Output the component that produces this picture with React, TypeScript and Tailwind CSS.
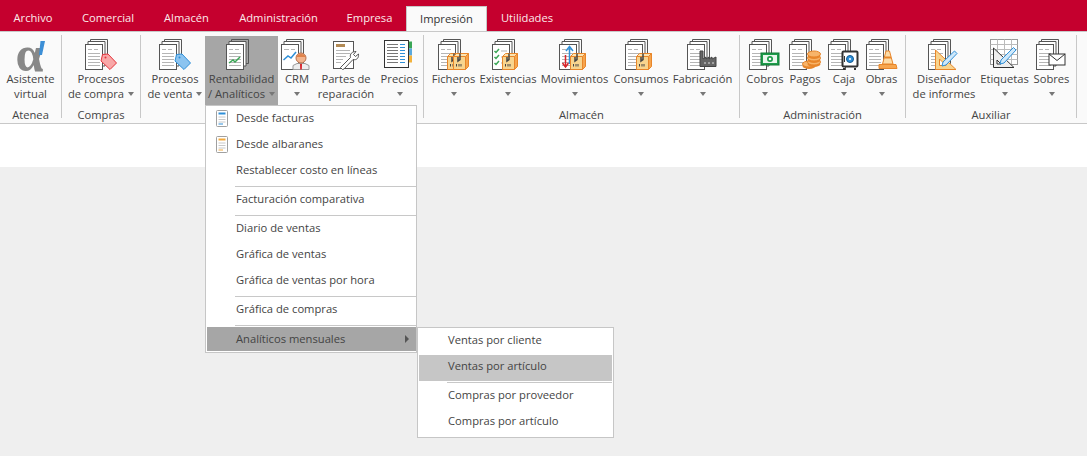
import React from "react";

const F = "[font-family:'Open_Sans','Noto_Sans',sans-serif]";

function Page({ children, lines = true }: { children?: React.ReactNode; lines?: boolean }) {
  return (
    <svg width="34" height="34" viewBox="0 0 34 34" className="block">
      <path d="M6.5 3.5V1.5H23.5V25.5H21" fill="none" stroke="#555" />
      <path d="M4 6V3.5H21V28H18.5" fill="#fff" stroke="#555" />
      <rect x="1.5" y="6.5" width="17" height="25" fill="#fff" stroke="#555" />
      {lines && (
        <g stroke="#b5b5b5">
          <path d="M4 11.5H8M10 11.5H14" />
          <path d="M4 15.5H16M4 18.5H16M4 21.5H16M4 24.5H16M4 27.5H16" />
        </g>
      )}
      {children}
    </svg>
  );
}

function Box({ x = 0 }: { x?: number }) {
  return (
    <g transform={`translate(${x} 0)`}>
      <path d="M11.5 18.5H23.5V31.5H11.5Z" fill="#f8d48e" stroke="#e8862a" />
      <path d="M23.5 18.5L26.5 15.5V28.5L23.5 31.5Z" fill="#f6a44c" stroke="#e8862a" />
      <path d="M11.5 18.5L14.5 15.5H26.5L23.5 18.5Z" fill="#fbe3b0" stroke="#e8862a" />
      <path d="M16 19V23L18 21.5V15.5" fill="none" stroke="#444" strokeWidth="1.5" />
      <path d="M14.5 28.5V26M17 28.5V26M19 28.5V26" stroke="#444" />
    </g>
  );
}

const Tag = ({ fill, line }: { fill: string; line: string }) => (
  <g>
    <path d="M18.5 16.5L24 16L32.5 25L26 31.5L17 23Z" fill={fill} stroke={line} />
    <circle cx="21.5" cy="19.5" r="1" fill={line} />
  </g>
);

function Alpha() {
  return (
    <div className="relative h-[34px] w-[34px]">
      <span className="absolute left-[2px] top-[-1px] text-[50px] font-bold leading-[34px] text-[#888] [font-family:'Liberation_Serif',serif]">α</span>
      <svg width="34" height="34" viewBox="0 0 34 34" className="absolute left-0 top-0 block">
        <path d="M26.5 3H31L28 17H25Z" fill="#3c8fd6" />
      </svg>
    </div>
  );
}

function CrmIcon() {
  return (
    <Page lines={false}>
      <path d="M4 11.5H9M11 11.5H15" stroke="#b5b5b5" />
      <path d="M3.5 22L8 18L11 20L16 14" fill="none" stroke="#2e8fd8" strokeWidth="1.5" />
      <path d="M13 31.5V27.5L17 25.5H25L29 27.5V31.5Z" fill="#eee" stroke="#999" />
      <path d="M20 26H22L21.8 31.5H20.2Z" fill="#d8232a" />
      <circle cx="21" cy="20" r="5" fill="#f3b48d" stroke="#b96f4a" />
      <path d="M16.5 19C17 15 25 15 25.5 19Z" fill="#e0824a" />
    </Page>
  );
}

function PartesIcon() {
  return (
    <svg width="34" height="34" viewBox="0 0 34 34" className="block">
      <rect x="4.5" y="3.5" width="20" height="27" fill="#fff" stroke="#555" />
      <rect x="7" y="6" width="9" height="3" fill="#b28a55" />
      <path d="M7 12.5H21M7 15.5H21M7 18.5H17M7 21.5H14M7 24.5H12" stroke="#b5b5b5" />
      <path d="M13.5 31.5L11.5 29.5L21.5 19.5C20.5 16 23 13.5 27 13.5L24.5 16.5L26.5 18.5L29.5 16C30 20 27.5 22.5 24 21.5L15 31Z" fill="#fff" stroke="#555" />
    </svg>
  );
}

function PreciosIcon() {
  return (
    <svg width="34" height="34" viewBox="0 0 34 34" className="block">
      <rect x="24" y="3.5" width="5" height="7" fill="#3aa655" />
      <rect x="24" y="10.5" width="5" height="7" fill="#5aa9dd" />
      <rect x="24" y="17.5" width="5" height="7" fill="#f2b23c" />
      <rect x="1.5" y="2.5" width="24" height="27" fill="#fff" stroke="#333" />
      <path d="M4 6.5H15M4 9.5H15M4 12.5H15M4 15.5H15M4 18.5H15M4 21.5H15M4 24.5H15" stroke="#777" />
      <path d="M17 6.5H22M17 9.5H22M17 12.5H22M17 15.5H22M17 18.5H22M17 21.5H22M17 24.5H22" stroke="#2e8fd8" />
    </svg>
  );
}

function ExistIcon() {
  return (
    <Page lines={false}>
      <path d="M3.5 13L5 14.5L8 11M3.5 19L5 20.5L8 17M3.5 25L5 26.5L8 23" fill="none" stroke="#3aa655" strokeWidth="1.5" />
      <path d="M10 13H16M10 19H14M10 25H14" stroke="#b5b5b5" />
      <Box x={0} />
    </Page>
  );
}

function MoveIcon() {
  return (
    <Page>
      <path d="M7.5 29V17" stroke="#d8232a" strokeWidth="1.5" />
      <path d="M4.5 25L7.5 29L10.5 25" fill="none" stroke="#d8232a" strokeWidth="1.5" />
      <path d="M11.5 26V10" stroke="#2e8fd8" strokeWidth="1.5" />
      <path d="M8 13L11.5 8.5L15 13" fill="none" stroke="#2e8fd8" strokeWidth="1.5" />
      <Box x={1} />
    </Page>
  );
}

function FactoryIcon() {
  return (
    <Page>
      <path d="M14 27V13H17V21L20 19V21L23 19V21L26 19V21L30 19V28.5H14Z" fill="#666" stroke="#444" />
      <path d="M18 25H20M22 25H24M26 25H28" stroke="#ddd" />
    </Page>
  );
}

function CobrosIcon() {
  return (
    <Page>
      <rect x="13" y="15" width="18" height="12" fill="#1e9c4b" stroke="#107a36" />
      <rect x="15" y="17" width="14" height="8" fill="#eaf7ee" />
      <circle cx="22" cy="21" r="3" fill="#1e9c4b" />
      <circle cx="22" cy="21" r="1.3" fill="#fff" />
    </Page>
  );
}

const Coin = ({ x, y }: { x: number; y: number }) => (
  <g>
    <ellipse cx={x} cy={y + 2} rx="6.5" ry="3" fill="#e8862a" />
    <ellipse cx={x} cy={y} rx="6.5" ry="3" fill="#f7b46a" stroke="#e8862a" />
  </g>
);

function PagosIcon() {
  return (
    <Page>
      <Coin x={21} y={26} />
      <Coin x={26} y={24} />
      <Coin x={26} y={20} />
      <Coin x={26} y={16} />
    </Page>
  );
}

function CajaIcon() {
  return (
    <Page>
      <rect x="15.5" y="13.5" width="15" height="15" rx="1" fill="#fff" stroke="#333" strokeWidth="2" />
      <path d="M17 30V32M28 30V32" stroke="#333" strokeWidth="2" />
      <circle cx="23" cy="21" r="3.5" fill="#2e8fd8" stroke="#145a92" />
      <circle cx="23" cy="21" r="1" fill="#fff" />
      <path d="M17.5 18V24" stroke="#333" />
    </Page>
  );
}

function ConeIcon() {
  return (
    <Page>
      <path d="M21 13H24.5L28 26H17.5Z" fill="#fcdca8" stroke="#e8862a" />
      <path d="M19.5 19.5H26" stroke="#e8862a" strokeWidth="2" />
      <path d="M14 26.5H31L32 30.5H14Z" fill="#f7a64e" stroke="#e8862a" />
    </Page>
  );
}

function DesignIcon() {
  return (
    <Page>
      <path d="M8.5 12V31.5H29Z" fill="#f8d48e" stroke="#e8862a" />
      <path d="M12.5 21V27.5H19Z" fill="#fff" stroke="#e8862a" />
      <path d="M16 24L15 28L19 27L30 15.5L27.5 13Z" fill="#cfe8fa" stroke="#2e8fd8" />
    </Page>
  );
}

function LabelIcon() {
  return (
    <svg width="34" height="34" viewBox="0 0 34 34" className="block">
      <rect x="2.5" y="1.5" width="27" height="25" fill="#fff" stroke="#999" />
      <path d="M2.5 6.5H29.5M2.5 11.5H29.5M2.5 16.5H29.5M2.5 21.5H29.5M9.5 1.5V26.5M16.5 1.5V26.5M23.5 1.5V26.5" stroke="#bbb" />
      <path d="M5.5 10V29.5H26Z" fill="#eee" stroke="#333" />
      <path d="M9 22V26H13Z" fill="#fff" stroke="#333" />
      <path d="M13 22L12 26L16 25L28 12L25.5 9.5Z" fill="#cfe8fa" stroke="#2e8fd8" />
    </svg>
  );
}

function EnvelopeIcon() {
  return (
    <Page>
      <rect x="14" y="16" width="16" height="11" fill="#fff" stroke="#333" />
      <path d="M14 16L22 22.5L30 16" fill="none" stroke="#333" />
    </Page>
  );
}

function Caret() {
  return <span className="inline-block h-0 w-0 border-x-[3.5px] border-t-[4px] border-x-transparent border-t-[#777] align-middle" />;
}

function Btn({ w, icon, l1, l2, active, caretInline }: { w: string; icon: React.ReactNode; l1: string; l2?: string; active?: boolean; caretInline?: boolean }) {
  return (
    <div className={`${w} mt-px flex h-[69px] shrink-0 flex-col items-center whitespace-nowrap pt-[2px] ${active ? "bg-[#a6a6a6]" : ""}`}>
      <div className="h-[33px]">{icon}</div>
      <div className="flex h-[15px] items-center leading-[15px]">{l1}</div>
      <div className="flex h-[15px] items-center gap-[4px] leading-[15px]">
        {l2 && <span>{l2}</span>}
        {(!l2 || caretInline) && <Caret />}
      </div>
    </div>
  );
}

function Group({ w, label, children }: { w: string; label?: string; children: React.ReactNode }) {
  return (
    <div className={`${w} flex h-[83px] shrink-0 flex-col border-r border-[#c8c8c8]`}>
      <div className="flex justify-center">{children}</div>
      <div className="-mb-[3px] flex flex-1 items-end justify-center leading-[13px]">{label}</div>
    </div>
  );
}

function Item({ icon, children }: { icon?: React.ReactNode; children: string }) {
  return (
    <div className="flex h-[26px] items-center pb-[3px]">
      <div className="flex w-[29px] justify-center">{icon}</div>
      <div>{children}</div>
    </div>
  );
}

const Sep = () => <div className="my-[1px] ml-[28px] h-px bg-[#c8c8c8]" />;

function MiniDoc({ c }: { c: string }) {
  return (
    <svg width="12" height="17" viewBox="0 0 12 17">
      <rect x="0.5" y="0.5" width="11" height="16" rx="1" fill="#fff" stroke="#a0a0a0" />
      <path d="M2.5 3.5H9.5" stroke={c} strokeWidth="2" />
      <path d="M2.5 7H9.5M2.5 9.5H9.5M2.5 12H9.5" stroke="#c8c8c8" />
      <path d="M2.5 14H7" stroke={c} />
    </svg>
  );
}

const tabs: [string, string][] = [
  ["Comercial", "w-[82px]"],
  ["Almacén", "w-[75px]"],
  ["Administración", "w-[109px]"],
  ["Empresa", "w-[73px]"],
];

export default function App() {
  return (
    <div className={`${F} relative h-[456px] w-[1087px] overflow-hidden bg-[#efefef] text-[11.2px] text-[#444]`}>
      <div className="flex h-[31px] items-end bg-[#c5002e] text-[#fbeaea]">
        <div className="flex h-[25px] w-[66px] items-center justify-center">Archivo</div>
        <div className="w-px" />
        {tabs.map(([t, w]) => (
          <div key={t} className={`${w} flex h-[25px] items-center justify-center`}>{t}</div>
        ))}
        <div className="flex h-[25px] w-[81px] items-center justify-center border-x border-t border-[#c8c8c8] bg-[#fafafa] text-[#333]">Impresión</div>
        <div className="flex h-[25px] w-[80px] items-center justify-center">Utilidades</div>
      </div>
      <div className="flex h-[93px] border-y border-[#c8c8c8] bg-[#fafafa] pt-[3px]">
        <Group w="w-[62px]" label="Atenea">
          <Btn w="w-[58px]" icon={<Alpha />} l1="Asistente" l2="virtual" />
        </Group>
        <Group w="w-[79px]" label="Compras">
          <Btn w="w-[70px]" icon={<Page><Tag fill="#f8a8a8" line="#e5343c" /></Page>} l1="Procesos" l2="de compra" caretInline />
        </Group>
        <div className="flex h-[83px] w-[283px] shrink-0 flex-col border-r border-[#c8c8c8]">
          <div className="flex pl-[4px]">
            <Btn w="w-[60px]" icon={<Page><Tag fill="#8cc4f0" line="#2e8fd8" /></Page>} l1="Procesos" l2="de venta" caretInline />
            <Btn w="w-[73px]" active icon={<Page><path d="M4 25L8 22L10 24L15 19" fill="none" stroke="#3aa655" strokeWidth="1.5" /></Page>} l1="Rentabilidad" l2="/ Analíticos" caretInline />
            <Btn w="w-[38px]" icon={<CrmIcon />} l1="CRM" />
            <Btn w="w-[60px]" icon={<PartesIcon />} l1="Partes de" l2="reparación" />
            <Btn w="w-[47px]" icon={<PreciosIcon />} l1="Precios" />
          </div>
        </div>
        <Group w="w-[316px]" label="Almacén">
          <Btn w="w-[48px]" icon={<Page><Box x={-1} /><Box x={5} /></Page>} l1="Ficheros" />
          <Btn w="w-[61px]" icon={<ExistIcon />} l1="Existencias" />
          <Btn w="w-[72px]" icon={<MoveIcon />} l1="Movimientos" />
          <Btn w="w-[61px]" icon={<Page><Box x={1} /></Page>} l1="Consumos" />
          <Btn w="w-[62px]" icon={<FactoryIcon />} l1="Fabricación" />
        </Group>
        <Group w="w-[166px]" label="Administración">
          <Btn w="w-[40px]" icon={<CobrosIcon />} l1="Cobros" />
          <Btn w="w-[40px]" icon={<PagosIcon />} l1="Pagos" />
          <Btn w="w-[38px]" icon={<CajaIcon />} l1="Caja" />
          <Btn w="w-[37px]" icon={<ConeIcon />} l1="Obras" />
        </Group>
        <Group w="w-[171px]" label="Auxiliar">
          <Btn w="w-[68px]" icon={<DesignIcon />} l1="Diseñador" l2="de informes" />
          <Btn w="w-[53px]" icon={<LabelIcon />} l1="Etiquetas" />
          <Btn w="w-[41px]" icon={<EnvelopeIcon />} l1="Sobres" />
        </Group>
      </div>
      <div className="h-[43px] bg-white" />

      <div className="absolute left-[205px] top-[105px] w-[212px] border border-[#c6c6c6] bg-white pb-px pl-px pt-px">
        <Item icon={<MiniDoc c="#2e8fd8" />}>Desde facturas</Item>
        <Item icon={<MiniDoc c="#f2a93c" />}>Desde albaranes</Item>
        <Item>Restablecer costo en líneas</Item>
        <Sep />
        <Item>Facturación comparativa</Item>
        <Sep />
        <Item>Diario de ventas</Item>
        <Item>Gráfica de ventas</Item>
        <Item>Gráfica de ventas por hora</Item>
        <Sep />
        <Item>Gráfica de compras</Item>
        <Sep />
        <div className="flex h-[24px] items-center bg-[#a6a6a6]">
          <div className="ml-[29px] flex-1">Analíticos mensuales</div>
          <span className="mr-[7px] h-0 w-0 border-y-[4px] border-l-[4px] border-y-transparent border-l-[#555]" />
        </div>
      </div>

      <div className="absolute left-[417px] top-[327px] w-[197px] border border-[#c6c6c6] bg-white p-px">
        <div className="flex h-[26px] items-center pb-[4px] pl-[29px]">Ventas por cliente</div>
        <div className="flex h-[26px] items-center bg-[#c6c6c6] pb-[4px] pl-[29px]">Ventas por artículo</div>
        <Sep />
        <div className="flex h-[26px] items-center pb-[4px] pl-[29px]">Compras por proveedor</div>
        <div className="flex h-[26px] items-center pb-[4px] pl-[29px]">Compras por artículo</div>
      </div>
    </div>
  );
}
